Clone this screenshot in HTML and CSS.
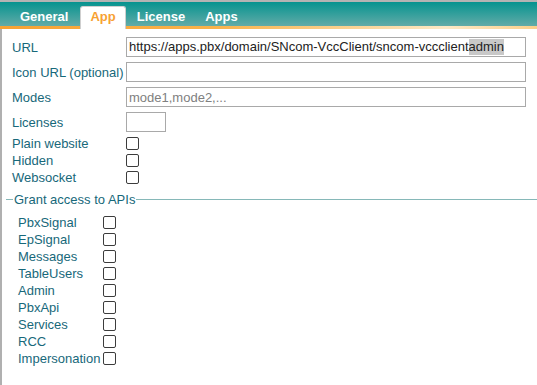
FILE: index.html
```html
<!DOCTYPE html>
<html>
<head>
<meta charset="utf-8">
<link rel="stylesheet" href="styles.css">
</head>
<body>
<div class="tabbar">
  <div class="tab">General</div>
  <div class="tab active">App</div>
  <div class="tab">License</div>
  <div class="tab">Apps</div>
</div>
<div class="content">
  <div class="fields">
    <label class="lbl">URL</label>
    <div class="textbox">https://apps.pbx/domain/SNcom-VccClient/sncom-vccclient<span class="sel">admin</span></div>
    <label class="lbl">Icon URL (optional)</label>
    <input class="input" type="text">
    <label class="lbl">Modes</label>
    <input class="input" type="text" placeholder="mode1,mode2,...">
    <label class="lbl">Licenses</label>
    <input class="input small" type="text">
  </div>
  <div class="checks">
    <label class="lbl">Plain website</label><input class="cb" type="checkbox">
    <label class="lbl">Hidden</label><input class="cb" type="checkbox">
    <label class="lbl">Websocket</label><input class="cb" type="checkbox">
  </div>
  <fieldset class="apis">
    <legend>Grant access to APIs</legend>
    <div class="apigrid">
      <label class="lbl">PbxSignal</label><input class="cb" type="checkbox">
      <label class="lbl">EpSignal</label><input class="cb" type="checkbox">
      <label class="lbl">Messages</label><input class="cb" type="checkbox">
      <label class="lbl">TableUsers</label><input class="cb" type="checkbox">
      <label class="lbl">Admin</label><input class="cb" type="checkbox">
      <label class="lbl">PbxApi</label><input class="cb" type="checkbox">
      <label class="lbl">Services</label><input class="cb" type="checkbox">
      <label class="lbl">RCC</label><input class="cb" type="checkbox">
      <label class="lbl">Impersonation</label><input class="cb" type="checkbox">
    </div>
  </fieldset>
</div>
</body>
</html>
```
FILE: styles.css
```css
html, body {
  margin: 0;
  padding: 0;
  background: #fff;
}
body {
  font-family: "Liberation Sans", Arial, sans-serif;
  font-size: 13px;
  border-top: 2px solid #b3b3b3;
  height: 383px;
  overflow: hidden;
}
.tabbar {
  display: flex;
  align-items: flex-end;
  height: 27px;
  padding-left: 10px;
  background:
    linear-gradient(to right, #f7a233 0%, #f9b24a 40%, #fde9c6 83%, #fcd08a 100%) left bottom / 100% 3px no-repeat,
    linear-gradient(to bottom, #05938f 0%, #6eaeab 100%);
}
.tab {
  box-sizing: border-box;
  height: 23px;
  padding: 2px 9px 0;
  line-height: 15px;
  font-weight: bold;
  color: #fff;
  border: 1px solid transparent;
  border-bottom: 0;
}
.tab.active {
  margin: 0 1px 0 2px;
  background: #fff;
  color: #f7a233;
  border-color: #cfcfcf;
  border-radius: 3px 3px 0 0;
}
.content {
  border-left: 2px solid #b0b0b0;
  height: 356px;
  box-sizing: border-box;
  padding-top: 8px;
}
.lbl {
  color: #17687a;
  line-height: 15px;
  white-space: nowrap;
}
.fields {
  display: grid;
  grid-template-columns: 114px 400px;
  grid-auto-rows: 20px;
  row-gap: 5px;
  align-items: center;
  padding-left: 10px;
}
.textbox, .input {
  box-sizing: border-box;
  height: 20px;
  margin: 0;
  border: 1px solid #a9a9a9;
  padding: 0 2px;
  font-family: "Liberation Sans", Arial, sans-serif;
  font-size: 13px;
  color: #222;
  background: #fff;
  outline: none;
}
.textbox {
  line-height: 18px;
  white-space: nowrap;
  overflow: hidden;
}
.sel {
  background: #c8c8c8;
  display: inline-block;
  line-height: 16px;
}
.input {
  width: 400px;
}
.input::placeholder {
  color: #808080;
}
.input.small {
  width: 40px;
}
.cb {
  appearance: none;
  -webkit-appearance: none;
  box-sizing: border-box;
  width: 13px;
  height: 13px;
  margin: 0;
  border: 1px solid #3c3c3c;
  border-radius: 2px;
  background: #fff;
}
.checks {
  display: grid;
  grid-template-columns: 114px 13px;
  grid-auto-rows: 17px;
  align-items: center;
  padding-left: 10px;
  margin-top: 3px;
}
.apis {
  margin: 6px 0 0 4px;
  padding: 7px 0 0 7px;
  border: 0;
  border-top: 1px solid #86b8b8;
  min-width: 0;
}
.apis legend {
  padding: 0 1px;
  color: #17687a;
  line-height: 15px;
}
.apigrid {
  display: grid;
  grid-template-columns: max-content 13px;
  column-gap: 3px;
  grid-auto-rows: 17px;
  align-items: center;
  margin-left: 5px;
}
```
